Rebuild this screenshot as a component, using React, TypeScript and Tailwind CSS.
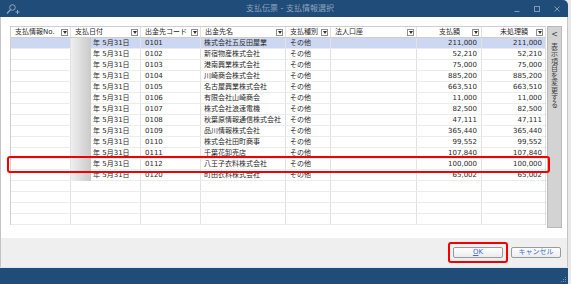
import React from "react";

const rows = [
  ["0101", "株式会社五反田屋業", "211,000"],
  ["0102", "新宿物産株式会社", "52,210"],
  ["0103", "港南興業株式会社", "75,000"],
  ["0104", "川崎商会株式会社", "885,200"],
  ["0105", "名古屋興業株式会社", "663,510"],
  ["0106", "有限会社山崎商会", "11,000"],
  ["0107", "株式会社浪速電機", "82,500"],
  ["0108", "秋葉原情報通信株式会社", "47,111"],
  ["0109", "品川情報株式会社", "365,440"],
  ["0110", "株式会社田町商事", "99,552"],
  ["0111", "千葉花卸売店", "107,840"],
  ["0112", "八王子衣料株式会社", "100,000"],
  ["0120", "町田衣料株式会社", "65,002"],
];

const gridCols = "grid grid-cols-[60px_70px_60px_85px_45px_86px_65px_64px]";
const cell = "h-full border-r border-[#e2e2e2] flex items-center overflow-hidden whitespace-nowrap";

const FilterBtn = () => (
  <span className="ml-auto mr-[2px] flex h-[7px] w-[7px] shrink-0 items-center justify-center border border-[#8f8f8f] bg-white">
    <svg width="4" height="3" viewBox="0 0 4 3">
      <path d="M0 0h4L2 3z" fill="#333" />
    </svg>
  </span>
);

const HeadCell = ({ label, center }: { label: string; center?: boolean }) => (
  <div className={cell + " pl-[4px]"}>
    {center ? (
      <span className="flex-1 text-center pl-[6px]">{label}</span>
    ) : (
      <span>{label}</span>
    )}
    <FilterBtn />
  </div>
);

const App = () => {
  const empty = Array.from({ length: 4 });
  return (
    <div
      className="relative h-[284px] w-[571px] overflow-hidden bg-[#e9e9e9] text-[#2a2a2a]"
      style={{ fontFamily: '"DejaVu Sans", "Noto Sans CJK JP", sans-serif' }}
    >
      <div className="flex h-[284px] w-[568px] flex-col overflow-hidden rounded-tr-[5px]">
        {/* title bar */}
        <div className="grid h-[17px] shrink-0 grid-cols-[1fr_auto_1fr] items-center bg-[#1f4c78] text-[8px] text-[#8ea4bd]">
          <div className="flex items-center pl-[5px]">
            <svg width="16" height="12" viewBox="0 0 16 12" fill="none" stroke="#8ea9c6" strokeWidth="1">
              <circle cx="7.5" cy="4.5" r="2.8" />
              <path d="M5.5 6.6L2 10.5" strokeWidth="1.3" />
              <path d="M10.5 9h4M12.5 7v4" />
            </svg>
          </div>
          <div className="pl-[12px]">支払伝票 - 支払情報選択</div>
          <div className="flex items-center justify-end gap-[14px] pr-[8px]">
            <svg width="6" height="6" viewBox="0 0 6 6">
              <path d="M0.5 5.5h5" stroke="#8099b4" strokeWidth="1" />
            </svg>
            <svg width="6" height="6" viewBox="0 0 6 6">
              <rect x="0.5" y="0.5" width="5" height="5" fill="none" stroke="#8099b4" strokeWidth="1" />
            </svg>
            <svg width="6" height="6" viewBox="0 0 6 6">
              <path d="M0.5 0.5l5 5M5.5 0.5l-5 5" stroke="#8099b4" strokeWidth="1" />
            </svg>
          </div>
        </div>

        {/* body */}
        <div className="relative flex h-[221px] shrink-0 gap-[1px] border-l border-r border-[#c4c4c4] bg-white pl-[9px] pt-[9px] text-[7px]">
          <div className="relative h-[199px] w-[536px] border border-[#cfcfcf]">
            <div className={gridCols + " h-[11px] border-b border-[#cfcfcf] bg-white"}>
              <HeadCell label="支払情報No." />
              <HeadCell label="支払日付" />
              <HeadCell label="出金先コード" />
              <HeadCell label="出金先名" />
              <HeadCell label="支払種別" />
              <HeadCell label="法人口座" />
              <HeadCell label="支払額" center />
              <HeadCell label="未処理額" center />
            </div>
            {rows.map(([code, name, amt], i) => (
              <div
                key={code}
                className={
                  gridCols +
                  " h-[11px] border-b border-[#ececec] " +
                  (i === 0 ? "bg-[#ccd7f1]" : "bg-white")
                }
              >
                <div className={cell}></div>
                <div className={cell + " pl-[22px]"}>年 5月31日</div>
                <div className={cell + " pl-[4px]"}>{code}</div>
                <div className={cell + " pl-[3px]"}>{name}</div>
                <div className={cell + " pl-[4px]"}>その他</div>
                <div className={cell}></div>
                <div className={cell + " justify-end pr-[4px]"}>{amt}</div>
                <div className={cell + " justify-end pr-[3px]"}>{amt}</div>
              </div>
            ))}
            {empty.map((_, i) => (
              <div key={i} className={gridCols + " h-[11px] border-b border-[#ececec]"}>
                <div className={cell}></div>
                <div className={cell}></div>
                <div className={cell}></div>
                <div className={cell}></div>
                <div className={cell}></div>
                <div className={cell}></div>
                <div className={cell}></div>
                <div className={cell}></div>
              </div>
            ))}
            {/* blurred year */}
            <div className="absolute left-[60px] top-[11px] h-[143px] w-[20px] bg-gradient-to-r from-[#efefef] to-[#cacaca]" />
          </div>

          {/* side panel */}
          <div className="flex h-[202px] w-[15px] flex-col items-center border border-[#b9b9b9] bg-[#d3d3d3] text-[#444]">
            <span className="mt-[4px] text-[8px] leading-none">&lt;</span>
            <div className="mt-[5px] flex flex-col items-center text-[7px] leading-[7.3px]">
              {"表示項目を変更する".split("").map((c, i) => (
                <span key={i}>{c}</span>
              ))}
            </div>
          </div>

          {/* highlight of row 0112 */}
          <div className="absolute left-[6px] top-[139px] h-[17px] w-[543px] rounded-[3px] border-2 border-[#f00000]" />
        </div>

        {/* footer */}
        <div className="flex h-[29px] shrink-0 items-center justify-end gap-[3px] border-l border-r border-[#c4c4c4] bg-[#efefef] pr-[6px] text-[7px] text-[#3a6fd8]">
          <div className="rounded-[3px] border-2 border-[#f00000] p-[3px]">
            <button className="flex h-[11px] w-[50px] items-center justify-center rounded-[2px] border border-[#9a9a9a] bg-gradient-to-b from-white to-[#ececec] leading-none">
              <span className="underline">O</span>K
            </button>
          </div>
          <button className="flex h-[11px] w-[50px] items-center justify-center rounded-[2px] border border-[#9a9a9a] bg-gradient-to-b from-white to-[#ececec] leading-none">
            キャンセル
          </button>
        </div>
        <div className="h-[1px] shrink-0 bg-[#dfe6ee]" />
        <div className="relative flex h-[16px] shrink-0 items-end justify-end bg-[#1f4c78] pb-[1px] pr-[1px]">
          <svg width="6" height="6" viewBox="0 0 6 6" fill="#7d93ab">
            <rect x="4" y="0" width="1" height="1" />
            <rect x="2" y="2" width="1" height="1" />
            <rect x="4" y="2" width="1" height="1" />
            <rect x="0" y="4" width="1" height="1" />
            <rect x="2" y="4" width="1" height="1" />
            <rect x="4" y="4" width="1" height="1" />
          </svg>
        </div>
      </div>
    </div>
  );
};

export default App;
